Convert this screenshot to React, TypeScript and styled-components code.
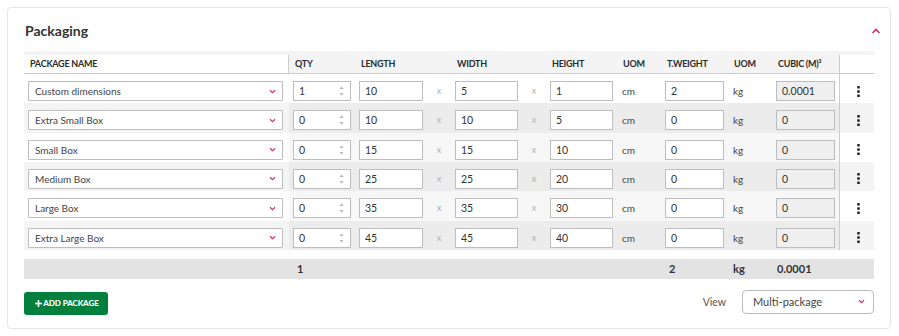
import React from "react";
import styled, { createGlobalStyle } from "styled-components";

const GlobalStyle = createGlobalStyle`
  html, body { margin: 0; padding: 0; background: #fff; }
  body { font-family: Lato, "Noto Sans", sans-serif; color: #333; }
  * { box-sizing: border-box; }
`;

const Card = styled.section`
  margin: 7px 8px 7px 7px;
  border: 1px solid #e6e6e6;
  border-radius: 4px;
  padding: 0 16px 13px 16px;
`;

const CardHeader = styled.div`
  height: 43px;
  padding-top: 1px;
  display: flex;
  align-items: center;
  justify-content: space-between;
  margin-right: -10px;
  padding-left: 1px;
`;

const Title = styled.h2`
  margin: 0;
  font-size: 14px;
  font-weight: 700;
  color: #333;
`;

const IconButton = styled.button`
  border: 0;
  background: transparent;
  padding: 2px 0 0;
  width: 16px;
  height: 16px;
  display: flex;
  align-items: center;
  justify-content: center;
  cursor: pointer;
`;

const Table = styled.div`
  width: 850px;
`;

const COLS = "66px 64px 32px 63px 32px 63px 52px 59px 52px 59px";

const HeadRow = styled.div`
  display: flex;
  height: 23px;
  padding-top: 3.5px;
  background: #f4f4f4;
  border-bottom: 1px solid #cccccc;
`;

const HeadLabel = styled.div<{ $pl?: number }>`
  font-size: 9px;
  font-weight: 700;
  letter-spacing: -0.25px;
  text-transform: uppercase;
  color: #2b2b2b;
  display: flex;
  align-items: center;
  padding-left: ${(p) => p.$pl ?? 2}px;
  white-space: nowrap;
`;

const NameHead = styled.div`
  width: 265px;
  background: #fff;
  border-right: 1px solid #cccccc;
  padding-left: 6px;
  display: flex;
  align-items: center;
`;

const MidHead = styled.div`
  width: 550px;
  padding: 0 4px;
  display: grid;
  grid-template-columns: ${COLS};
`;

const ActHead = styled.div`
  width: 35px;
  background: #fff;
  border-left: 1px solid #cccccc;
`;

type Tone = "white" | "dark" | "light";

const nameBg: Record<Tone, string> = { white: "#ffffff", dark: "#f4f4f4", light: "#ffffff" };
const midBg: Record<Tone, string> = { white: "#ffffff", dark: "#ececec", light: "#f7f7f7" };

const Row = styled.div`
  display: flex;
  height: 29.33px;
`;

const NameCell = styled.div<{ $tone: Tone }>`
  width: 265px;
  padding: 7px 6px 0 4px;
  background: ${(p) => nameBg[p.$tone]};
`;

const MidCell = styled.div<{ $tone: Tone }>`
  width: 550px;
  padding: 7px 4px 0;
  display: grid;
  grid-template-columns: ${COLS};
  align-items: start;
  background: ${(p) => midBg[p.$tone]};
`;

const ActCell = styled.div<{ $tone: Tone }>`
  width: 35px;
  border-left: 1px solid #cccccc;
  background: ${(p) => nameBg[p.$tone]};
  padding: 7px 0 0 3px;
`;

const KebabButton = styled.button`
  width: 100%;
  height: 20px;
  border: 0;
  padding: 0;
  background: transparent;
  display: flex;
  align-items: center;
  justify-content: center;
  cursor: pointer;
`;

const SelectBox = styled.div<{ $w?: number; $h?: number; $r?: number; $pl?: number; $pr?: number; $fs?: number }>`
  width: ${(p) => (p.$w ? `${p.$w}px` : "100%")};
  height: ${(p) => p.$h ?? 20}px;
  border: 1px solid #bdbdbd;
  border-radius: ${(p) => p.$r ?? 1}px;
  background: #fff;
  display: flex;
  align-items: center;
  justify-content: space-between;
  padding: 0 ${(p) => p.$pr ?? 6}px 0 ${(p) => p.$pl ?? 6}px;
  font-size: ${(p) => p.$fs ?? 10}px;
  color: #444;
`;

const NumBox = styled.div<{ $w: number; $disabled?: boolean }>`
  width: ${(p) => p.$w}px;
  height: 20px;
  border: 1px solid #bdbdbd;
  background: ${(p) => (p.$disabled ? "#efefef" : "#fff")};
  display: flex;
  align-items: center;
  justify-content: space-between;
  padding: 0 6px 0 5px;
  font-size: 10.5px;
  color: #333;
`;

const Times = styled.div<{ $blue?: boolean }>`
  height: 20px;
  line-height: 19px;
  text-align: center;
  font-size: 9px;
  color: ${(p) => (p.$blue ? "#8fb0c8" : "#b0b0b0")};
`;

const Unit = styled.div`
  height: 20px;
  line-height: 20px;
  padding-left: 9px;
  font-size: 10px;
  color: #444;
`;

const Empty = styled.div``;

const TotalsRow = styled.div`
  display: flex;
  height: 20px;
  margin-top: 9px;
  background: #e3e3e3;
`;

const TotalsSpacer = styled.div`
  width: 265px;
`;

const TotalsGrid = styled.div`
  width: 550px;
  padding: 0 4px;
  display: grid;
  grid-template-columns: ${COLS};
  align-items: center;
`;

const TotalVal = styled.div<{ $pl?: number }>`
  font-size: 11px;
  font-weight: 700;
  color: #333;
  padding-left: ${(p) => p.$pl ?? 4}px;
`;

const Footer = styled.div`
  margin-top: 11px;
  display: flex;
  justify-content: space-between;
  align-items: flex-start;
  width: 850px;
`;

const AddButton = styled.button`
  margin-top: 2px;
  width: 84px;
  height: 23px;
  border: 0;
  border-radius: 3px;
  background: #00803c;
  color: #fff;
  font-family: Lato, "Noto Sans", sans-serif;
  font-size: 8px;
  font-weight: 900;
  letter-spacing: -0.1px;
  display: flex;
  align-items: center;
  justify-content: center;
  gap: 1px;
  padding: 0 0 0 2px;
  cursor: pointer;
`;

const ViewGroup = styled.div`
  display: flex;
  align-items: center;
  gap: 16px;
`;

const ViewLabel = styled.span`
  font-size: 10.5px;
  color: #555;
`;

const ChevronDown = () => (
  <svg width="7" height="5" viewBox="0 0 7 5">
    <polyline points="1,1.2 3.5,3.6 6,1.2" fill="none" stroke="#d9305a" strokeWidth="1.2" />
  </svg>
);

const ChevronUp = () => (
  <svg width="10" height="6" viewBox="0 0 10 6">
    <polyline points="1.5,5 5,1.5 8.5,5" fill="none" stroke="#d9305a" strokeWidth="1.6" />
  </svg>
);

const Spinner = () => (
  <svg width="5" height="12" viewBox="0 0 5 12">
    <polygon points="0.5,4 2.5,1.5 4.5,4" fill="#b5b5b5" />
    <polygon points="0.5,8 2.5,10.5 4.5,8" fill="#b5b5b5" />
  </svg>
);

const Kebab = () => (
  <svg width="3" height="11" viewBox="0 0 3 11">
    <rect x="0.2" y="0" width="2.6" height="2.6" rx="0.6" fill="#222" />
    <rect x="0.2" y="4.2" width="2.6" height="2.6" rx="0.6" fill="#222" />
    <rect x="0.2" y="8.4" width="2.6" height="2.6" rx="0.6" fill="#222" />
  </svg>
);

const Plus = () => (
  <svg width="7" height="7" viewBox="0 0 7 7">
    <rect x="2.7" y="0" width="1.6" height="7" fill="#fff" />
    <rect x="0" y="2.7" width="7" height="1.6" fill="#fff" />
  </svg>
);

type Pkg = { name: string; qty: number; l: number; w: number; h: number; wt: number; cubic: string; blueX?: boolean };

const rows: Pkg[] = [
  { name: "Custom dimensions", qty: 1, l: 10, w: 5, h: 1, wt: 2, cubic: "0.0001" },
  { name: "Extra Small Box", qty: 0, l: 10, w: 10, h: 5, wt: 0, cubic: "0" },
  { name: "Small Box", qty: 0, l: 15, w: 15, h: 10, wt: 0, cubic: "0" },
  { name: "Medium Box", qty: 0, l: 25, w: 25, h: 20, wt: 0, cubic: "0" },
  { name: "Large Box", qty: 0, l: 35, w: 35, h: 30, wt: 0, cubic: "0", blueX: true },
  { name: "Extra Large Box", qty: 0, l: 45, w: 45, h: 40, wt: 0, cubic: "0" },
];

const toneFor = (i: number): Tone => (i === 0 ? "white" : i % 2 === 1 ? "dark" : "light");

export default function App() {
  return (
    <>
      <GlobalStyle />
      <Card>
        <CardHeader>
          <Title>Packaging</Title>
          <IconButton aria-label="Collapse">
            <ChevronUp />
          </IconButton>
        </CardHeader>
        <Table>
          <HeadRow>
            <NameHead>
              <HeadLabel $pl={0}>Package Name</HeadLabel>
            </NameHead>
            <MidHead>
              <HeadLabel>Qty</HeadLabel>
              <HeadLabel>Length</HeadLabel>
              <Empty />
              <HeadLabel>Width</HeadLabel>
              <Empty />
              <HeadLabel>Height</HeadLabel>
              <HeadLabel $pl={10}>UOM</HeadLabel>
              <HeadLabel>T.Weight</HeadLabel>
              <HeadLabel $pl={10}>UOM</HeadLabel>
              <HeadLabel>Cubic (M)³</HeadLabel>
            </MidHead>
            <ActHead />
          </HeadRow>
          {rows.map((r, i) => {
            const tone = toneFor(i);
            return (
              <Row key={r.name}>
                <NameCell $tone={tone}>
                  <SelectBox>
                    <span>{r.name}</span>
                    <ChevronDown />
                  </SelectBox>
                </NameCell>
                <MidCell $tone={tone}>
                  <NumBox $w={58}>
                    <span>{r.qty}</span>
                    <Spinner />
                  </NumBox>
                  <NumBox $w={64}>{r.l}</NumBox>
                  <Times $blue={r.blueX}>x</Times>
                  <NumBox $w={63}>{r.w}</NumBox>
                  <Times>x</Times>
                  <NumBox $w={63}>{r.h}</NumBox>
                  <Unit>cm</Unit>
                  <NumBox $w={59}>{r.wt}</NumBox>
                  <Unit>kg</Unit>
                  <NumBox $w={59} $disabled>
                    {r.cubic}
                  </NumBox>
                </MidCell>
                <ActCell $tone={tone}>
                  <KebabButton aria-label="More">
                    <Kebab />
                  </KebabButton>
                </ActCell>
              </Row>
            );
          })}
          <TotalsRow>
            <TotalsSpacer />
            <TotalsGrid>
              <TotalVal>1</TotalVal>
              <Empty />
              <Empty />
              <Empty />
              <Empty />
              <Empty />
              <Empty />
              <TotalVal>2</TotalVal>
              <TotalVal $pl={9}>kg</TotalVal>
              <TotalVal $pl={1}>0.0001</TotalVal>
            </TotalsGrid>
          </TotalsRow>
        </Table>
        <Footer>
          <AddButton>
            <Plus />
            ADD PACKAGE
          </AddButton>
          <ViewGroup>
            <ViewLabel>View</ViewLabel>
            <SelectBox $w={132} $h={24} $r={4} $pl={10} $pr={8} $fs={11}>
              <span>Multi-package</span>
              <ChevronDown />
            </SelectBox>
          </ViewGroup>
        </Footer>
      </Card>
    </>
  );
}
